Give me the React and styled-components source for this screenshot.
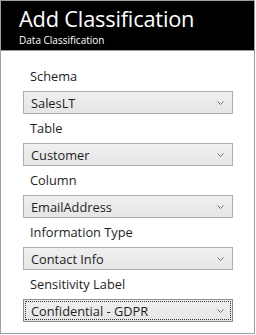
import React from "react";
import styled, { createGlobalStyle } from "styled-components";

const GlobalStyle = createGlobalStyle`
  html, body { margin: 0; padding: 0; background: #ffffff; }
  body { font-family: "Open Sans", "Noto Sans", sans-serif; }
`;

const Frame = styled.div`
  width: 255px;
  height: 334px;
  box-sizing: border-box;
  border: 1px solid #a0a0a0;
  background: #ffffff;
  display: flex;
  flex-direction: column;
`;

const Header = styled.div`
  background: #000000;
  color: #ffffff;
  height: 50px;
  box-sizing: border-box;
  border-bottom: 1px solid #9a9a9a;
  padding: 4px 0 0 18px;
  display: flex;
  flex-direction: column;
`;

const Title = styled.div`
  font-size: 21.8px;
  line-height: 28px;
  letter-spacing: -0.2px;
`;

const Subtitle = styled.div`
  font-size: 10px;
  line-height: 13px;
  margin-top: 1px;
`;

const Form = styled.div`
  padding: 11px 21px 0 22px;
  display: flex;
  flex-direction: column;
`;

const Label = styled.div`
  font-size: 12.8px;
  color: #1e1e1e;
  height: 29px;
  line-height: 29px;
  padding-left: 7px;
`;

const Select = styled.div`
  height: 23px;
  box-sizing: border-box;
  border: 1px solid ${p => (p.$focused ? "#8a8a8a" : "#adadad")};
  outline: ${p => (p.$focused ? "1px dotted #333" : "none")};
  outline-offset: -3px;
  background: linear-gradient(#f0f0f0, #e5e5e5);
  display: flex;
  align-items: center;
  justify-content: space-between;
  padding: 0 8px 0 7px;
  font-size: 12.8px;
  color: #1e1e1e;
`;

const Chevron = () => (
  <svg width="7" height="4" viewBox="0 0 7 4">
    <path d="M0.5 0.5 L3.5 3.5 L6.5 0.5" fill="none" stroke="#707070" strokeWidth="1" />
  </svg>
);

const fields = [
  { label: "Schema", value: "SalesLT" },
  { label: "Table", value: "Customer" },
  { label: "Column", value: "EmailAddress" },
  { label: "Information Type", value: "Contact Info" },
  { label: "Sensitivity Label", value: "Confidential - GDPR", focused: true },
];

export default function App() {
  return (
    <>
      <GlobalStyle />
      <Frame>
        <Header>
          <Title>Add Classification</Title>
          <Subtitle>Data Classification</Subtitle>
        </Header>
        <Form>
          {fields.map(f => (
            <React.Fragment key={f.label}>
              <Label>{f.label}</Label>
              <Select $focused={f.focused}>
                <span>{f.value}</span>
                <Chevron />
              </Select>
            </React.Fragment>
          ))}
        </Form>
      </Frame>
    </>
  );
}
